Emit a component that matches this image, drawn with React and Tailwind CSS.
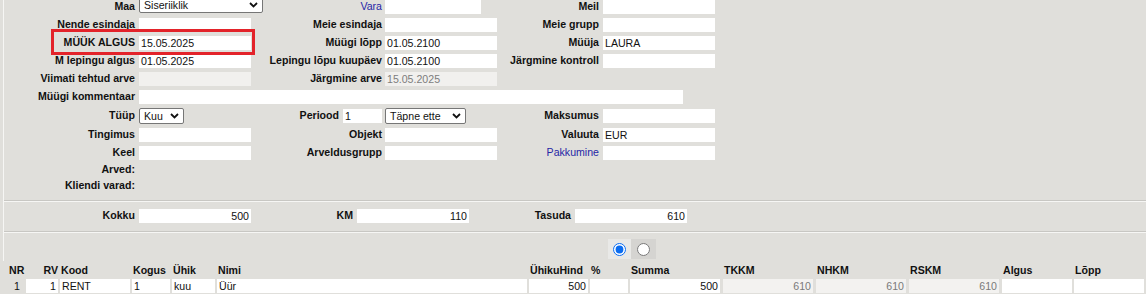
import React from "react";

const font = { fontFamily: '"Liberation Sans", Arial, sans-serif' };

function Label({ children, blue, pr = "pr-[4px]", w }) {
  return (
    <div
      className={`${w} ${pr} text-right whitespace-nowrap ${
        blue ? "text-[#2626a6] font-normal" : "text-[#111] font-bold"
      }`}
    >
      {children}
    </div>
  );
}

function Field({ value = "", w = "w-[112px]", ro, right }) {
  return (
    <div
      className={`${w} h-[14px] leading-[14px] px-[2px] overflow-hidden whitespace-nowrap ${
        ro ? "bg-[#f1f0ee] text-[#7d7d7d]" : "bg-white text-[#111]"
      } ${right ? "text-right" : ""}`}
    >
      {value}
    </div>
  );
}

function Select({ value, w, h = "h-[16px]" }) {
  return (
    <div
      className={`${w} ${h} flex items-center justify-between bg-white border border-[#767676] rounded-[2px] pl-[4px] pr-[4px] text-[#111]`}
    >
      <span className="leading-[14px]">{value}</span>
      <svg width="9" height="6" viewBox="0 0 9 6">
        <path d="M1 1 L4.5 4.5 L8 1" fill="none" stroke="#111" strokeWidth="1.8" />
      </svg>
    </div>
  );
}

const cols = [
  { h: "NR", w: "w-[26px]", hp: "pl-[9px]" },
  { h: "RV", w: "w-[32px]", right: true },
  { h: "Kood", w: "w-[70px] ml-[2px]" },
  { h: "Kogus", w: "w-[38px] ml-[2px]" },
  { h: "Ühik", w: "w-[43px] ml-[2px]" },
  { h: "Nimi", w: "w-[310px] ml-[2px]" },
  { h: "ÜhikuHind", w: "w-[59px] ml-[2px]" },
  { h: "%", w: "w-[38px] ml-[2px]" },
  { h: "Summa", w: "w-[90px] ml-[2px]" },
  { h: "TKKM", w: "w-[90px] ml-[3px]" },
  { h: "NHKM", w: "w-[90px] ml-[3px]" },
  { h: "RSKM", w: "w-[90px] ml-[3px]" },
  { h: "Algus", w: "w-[70px] ml-[3px]" },
  { h: "Lõpp", w: "w-[70px] ml-[2px]" },
];

const rowData = [
  { v: "1", nr: true },
  { v: "1", right: true },
  { v: "RENT" },
  { v: "1" },
  { v: "kuu" },
  { v: "Üür" },
  { v: "500", right: true },
  { v: "" },
  { v: "500", right: true },
  { v: "610", right: true, ro: true },
  { v: "610", right: true, ro: true },
  { v: "610", right: true, ro: true },
  { v: "" },
  { v: "" },
];

export default function App() {
  const L1 = "w-[135px]";
  const L2 = "w-[134px]";
  const L3 = "w-[106px]";
  const pr2 = "pr-[3px]";

  return (
    <div
      style={font}
      className="relative w-[1146px] h-[294px] overflow-hidden bg-[#e0dfdb] text-[10.6px] text-[#111]"
    >
      <div className="ml-[3px] border-l border-[#f6f6f4]">
        {/* main form */}
        <div className="pb-[6px] border-b border-[#c8c7c3]">
          <div className="flex items-start h-[16px]">
            <Label w={L1}><span className="leading-[13px] block">Maa</span></Label>
            <div className="w-[112px]">
              <div className="-mt-[3px]">
                <Select value="Siseriiklik" w="w-[124px]" />
              </div>
            </div>
            <Label w={L2} pr={pr2} blue><span className="leading-[13px] block">Vara</span></Label>
            <Field w="w-[96px]" />
            <div className="w-[16px]" />
            <Label w={L3}><span className="leading-[13px] block">Meil</span></Label>
            <Field />
          </div>

          <div className="flex items-center h-[18px]">
            <Label w={L1}>Nende esindaja</Label>
            <Field />
            <Label w={L2} pr={pr2}>Meie esindaja</Label>
            <Field />
            <Label w={L3}>Meie grupp</Label>
            <Field />
          </div>

          <div className="flex items-center h-[18px]">
            <Label w={L1}>MÜÜK ALGUS</Label>
            <Field value="15.05.2025" />
            <Label w={L2} pr={pr2}>Müügi lõpp</Label>
            <Field value="01.05.2100" />
            <Label w={L3}>Müüja</Label>
            <Field value="LAURA" />
          </div>

          <div className="flex items-center h-[18px]">
            <Label w={L1}>M lepingu algus</Label>
            <Field value="01.05.2025" />
            <Label w={L2} pr={pr2}>Lepingu lõpu kuupäev</Label>
            <Field value="01.05.2100" />
            <Label w={L3}>Järgmine kontroll</Label>
            <Field />
          </div>

          <div className="flex items-center h-[18px]">
            <Label w={L1}>Viimati tehtud arve</Label>
            <Field ro />
            <Label w={L2} pr={pr2}>Järgmine arve</Label>
            <Field ro value="15.05.2025" />
          </div>

          <div className="flex items-center h-[18px]">
            <Label w={L1}>Müügi kommentaar</Label>
            <Field w="w-[544px]" />
          </div>

          <div className="flex items-center h-[20px]">
            <Label w={L1}>Tüüp</Label>
            <div className="w-[112px]">
              <Select value="Kuu" w="w-[45px]" />
            </div>
            <div className={`${L2} ${pr2} flex items-center justify-end gap-[4px]`}>
              <span className="font-bold whitespace-nowrap">Periood</span>
              <Field w="w-[39px]" value="1" />
            </div>
            <div className="w-[112px]">
              <Select value="Täpne ette" w="w-[81px]" />
            </div>
            <Label w={L3}>Maksumus</Label>
            <Field />
          </div>

          <div className="flex items-center h-[18px]">
            <Label w={L1}>Tingimus</Label>
            <Field />
            <Label w={L2} pr={pr2}>Objekt</Label>
            <Field />
            <Label w={L3}>Valuuta</Label>
            <Field value="EUR" />
          </div>

          <div className="flex items-center h-[18px]">
            <Label w={L1}>Keel</Label>
            <Field />
            <Label w={L2} pr={pr2}>Arveldusgrupp</Label>
            <Field />
            <Label w={L3} blue>Pakkumine</Label>
            <Field />
          </div>

          <div className="flex items-center h-[16px]">
            <Label w={L1}>Arved:</Label>
          </div>
          <div className="flex items-center h-[16px]">
            <Label w={L1}>Kliendi varad:</Label>
          </div>
        </div>

        {/* totals */}
        <div className="border-t border-[#f6f6f4] border-b border-b-[#c8c7c3] pt-[7px] pb-[8px]">
          <div className="flex items-center h-[14px]">
            <Label w={L1}>Kokku</Label>
            <Field value="500" right />
            <Label w={L3}>KM</Label>
            <Field value="110" right />
            <Label w={L3}>Tasuda</Label>
            <Field value="610" right />
          </div>
        </div>

        {/* radio toggle */}
        <div className="border-t border-[#f6f6f4] pt-[6px] pb-[2px]">
          <div className="ml-[604px] flex h-[20px] w-[48px]">
            <div className="w-[23px] flex items-center justify-center bg-[#e9e9e7]">
              <input type="radio" name="v" defaultChecked className="m-0 w-[13px] h-[13px] accent-[#0a6cf0]" />
            </div>
            <div className="w-[25px] flex items-center justify-center bg-[#d5d4d1]">
              <input type="radio" name="v" className="m-0 w-[13px] h-[13px]" />
            </div>
          </div>
        </div>
      </div>

      {/* rows table */}
      <div className="flex items-center h-[16px] mt-[2px] font-bold">
        {cols.map((c) => (
          <div
            key={c.h}
            className={`${c.w} ${c.hp || "pl-[1px]"} ${c.right ? "text-right pr-0" : ""} whitespace-nowrap`}
          >
            {c.h}
          </div>
        ))}
      </div>
      <div className="flex items-center h-[14px]">
        {cols.map((c, i) => {
          const d = rowData[i];
          if (d.nr) {
            return (
              <div key={c.h} className={`${c.w} pl-[14px] leading-[14px]`}>
                {d.v}
              </div>
            );
          }
          return (
            <div
              key={c.h}
              className={`${c.w} h-[14px] leading-[14px] px-[2px] whitespace-nowrap ${
                d.ro ? "bg-[#f3f2f0] text-[#7a7a7a]" : "bg-white"
              } ${d.right ? "text-right" : ""}`}
            >
              {d.v}
            </div>
          );
        })}
      </div>

      {/* highlight box */}
      <div className="absolute left-[51px] top-[29px] w-[204px] h-[26px] border-[3px] border-[#e3232a] pointer-events-none" />
    </div>
  );
}
